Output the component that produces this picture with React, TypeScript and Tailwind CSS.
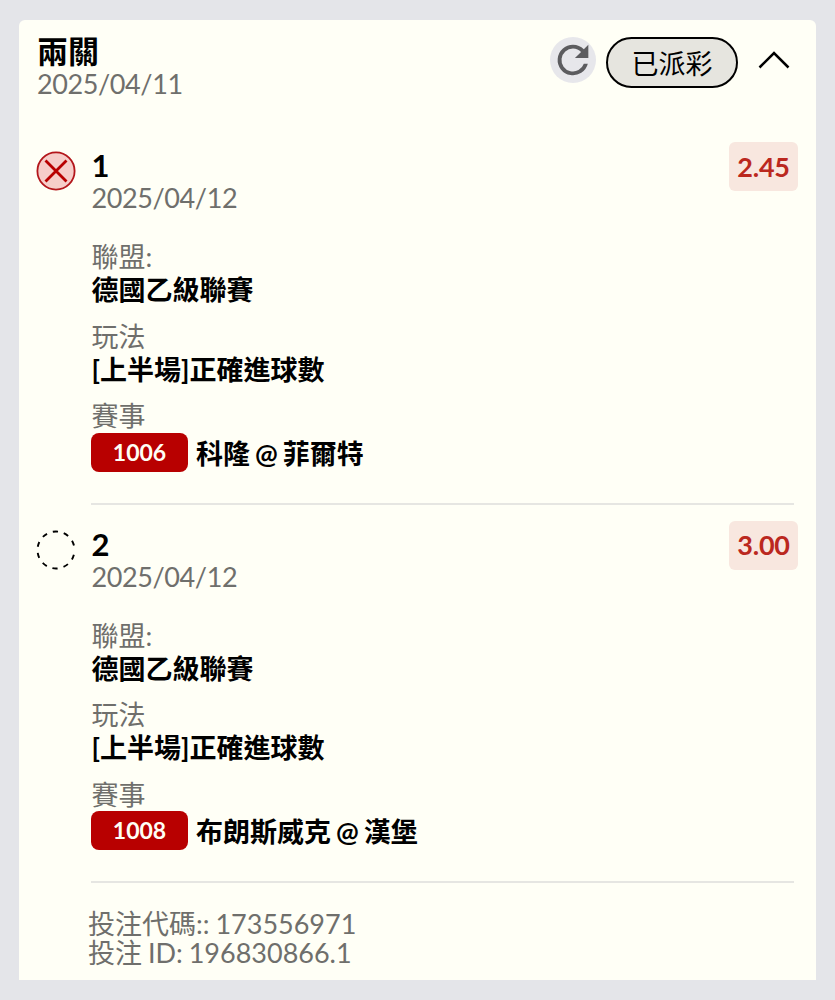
import React from 'react';

interface Leg {
  id: number;
  date: string;
  odds: string;
  status: 'lost' | 'pending';
  league: string;
  market: string;
  code: string;
  match: string;
}

const legs: Leg[] = [
  {
    id: 1,
    date: '2025/04/12',
    odds: '2.45',
    status: 'lost',
    league: '德國乙級聯賽',
    market: '[上半場]正確進球數',
    code: '1006',
    match: '科隆 @ 菲爾特',
  },
  {
    id: 2,
    date: '2025/04/12',
    odds: '3.00',
    status: 'pending',
    league: '德國乙級聯賽',
    market: '[上半場]正確進球數',
    code: '1008',
    match: '布朗斯威克 @ 漢堡',
  },
];

// ten dashes, with a wider gap on the right where the ring starts
const RING_DASHES = '16 19 16 19 16 19 16 19 16 19 16 19 16 19 16 19 16 19 16 29';

const StatusIcon = ({ status }: { status: Leg['status'] }) => {
  if (status === 'lost') {
    return (
      <svg viewBox="0 0 40 40" fill="none" className="-ml-px w-10 h-10">
        <circle cx="20" cy="20" r="18.6" fill="#f6cdc9" stroke="#b3161b" strokeWidth="1.8" />
        <path d="M9.5 9.5 30.5 30.5M30.5 9.5 9.5 30.5" stroke="#b80000" strokeWidth="2.8" />
      </svg>
    );
  }
  return (
    <svg viewBox="0 0 40 40" fill="none" className="-ml-px w-10 h-10">
      <circle
        cx="20"
        cy="20"
        r="18.5"
        stroke="#000"
        strokeWidth="1.9"
        pathLength="360"
        strokeDasharray={RING_DASHES}
        transform="rotate(15 20 20)"
      />
    </svg>
  );
};

const Field = ({ label, value }: { label: string; value: string }) => (
  <div className="mb-[13.5px] pl-[0.5px] leading-[33px]">
    <div className="text-[#6f6f6c]">{label}</div>
    <div className="font-bold">{value}</div>
  </div>
);

const LegRow = ({ leg }: { leg: Leg }) => (
  <div className="mb-[16px] flex h-[362.5px]">
    <div className="w-[54px] shrink-0 pt-[9px]">
      <StatusIcon status={leg.status} />
    </div>
    <div className="w-[703px] border-b-2 border-[#e6e6e2]">
      <div className="flex justify-between h-[98px]">
        <div className="pl-[0.5px]">
          <div className="h-[41px] pt-[4px] text-[31px] leading-[38px] font-bold">{leg.id}</div>
          <div className="leading-[30px] tracking-[-0.4px] text-[#6f6f6c]">{leg.date}</div>
        </div>
        <div className="-mr-1 flex h-[49px] w-[69px] items-center justify-center rounded-md bg-[#f8e7df] pt-px font-bold tracking-[-0.2px] text-[#bb281e]">
          {leg.odds}
        </div>
      </div>
      <Field label="聯盟:" value={leg.league} />
      <Field label="玩法" value={leg.market} />
      <div className="pl-[0.5px] leading-[33px] text-[#6f6f6c]">賽事</div>
      <div className="mt-[0.5px] flex h-[39px] items-center gap-2">
        <span className="flex h-[39px] w-[97px] items-center justify-center rounded-lg bg-[#b80000] text-[23px] font-bold text-[#fffef5]">
          {leg.code}
        </span>
        <span className="pt-1 font-bold [word-spacing:-1.6px]">{leg.match}</span>
      </div>
    </div>
  </div>
);

export default function App() {
  return (
    <div className="h-[1000px] w-[835px] bg-[#e4e5e9] pt-[19.5px] pl-[19px] font-['Lato','Noto_Sans_CJK_TC',sans-serif] text-[27px] text-black">
      <div className="h-[960.5px] w-[797px] rounded-t-md bg-[#fffff6] pl-[18px]">
        <header className="flex h-[122.5px] pt-[17px]">
          <div className="flex-1">
            <div className="h-[32px] text-[31px] leading-[28px] font-bold">兩關</div>
            <div className="leading-[30px] tracking-[-0.4px] text-[#6f6f6c]">2025/04/11</div>
          </div>
          <span className="mt-[0.5px] mr-[10px] flex h-[46px] w-[46px] items-center justify-center rounded-full bg-[#e7e7eb]">
            <svg viewBox="0 0 24 24" fill="#5c5c5f" className="w-[46px] h-[46px]">
              <path d="M17.65 6.35A7.95 7.95 0 0 0 12 4a8 8 0 1 0 7.73 10h-2.08A6 6 0 1 1 12 6c1.66 0 3.14.69 4.22 1.78L13 11h7V4z" />
            </svg>
          </span>
          <span className="mr-[20px] flex h-[51px] w-[132px] items-center justify-center rounded-full border-2 border-black bg-[#e6e5df] pt-1">
            已派彩
          </span>
          <svg viewBox="0 0 32 20" fill="none" className="mt-[13px] mr-[26px] h-5 w-8">
            <path d="M1.5 17.5 16 3l14.5 14.5" stroke="#000" strokeWidth="2.5" />
          </svg>
        </header>
        {legs.map((leg) => (
          <LegRow key={leg.id} leg={leg} />
        ))}
        <footer className="pt-[10px] pl-[51px] leading-[29px] text-[#6f6f6c] [word-spacing:-1px]">
          <div>投注代碼:: 173556971</div>
          <div>投注 ID: 196830866.1</div>
        </footer>
      </div>
    </div>
  );
}
